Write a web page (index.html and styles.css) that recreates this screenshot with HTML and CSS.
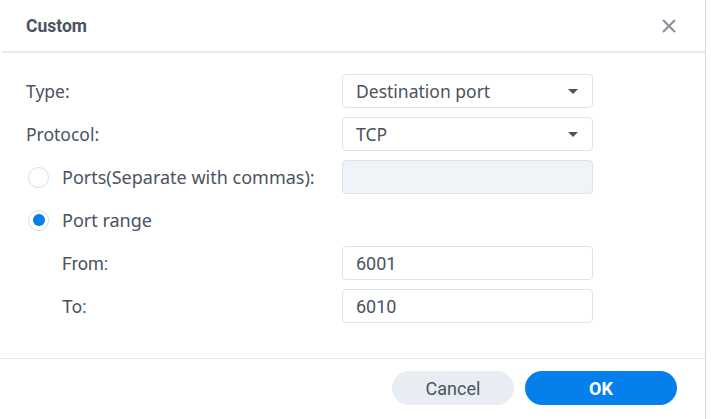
FILE: index.html
```html
<!DOCTYPE html>
<html lang="en">
<head>
    <meta charset="UTF-8">
    <title>Custom</title>
    <link rel="stylesheet" href="styles.css">
</head>
<body>

<div class="dialog">
    <div class="dialog-header">
        <span class="dialog-title">Custom</span>
        <span class="dialog-close">
            <svg width="16" height="16" viewBox="0 0 16 16">
                <path d="M2 2 L14 14 M14 2 L2 14" stroke="#8a929c" stroke-width="2.2" fill="none"/>
            </svg>
        </span>
    </div>

    <div class="dialog-body">
        <div class="row">
            <label class="field-label">Type:</label>
            <div class="select">
                <span>Destination port</span>
                <span class="caret"></span>
            </div>
        </div>

        <div class="row">
            <label class="field-label">Protocol:</label>
            <div class="select">
                <span>TCP</span>
                <span class="caret"></span>
            </div>
        </div>

        <div class="row">
            <label class="field-label radio-label">
                <span class="radio"></span>
                Ports(Separate with commas):
            </label>
            <div class="textbox disabled"></div>
        </div>

        <div class="row">
            <label class="field-label radio-label">
                <span class="radio checked"></span>
                Port range
            </label>
        </div>

        <div class="row">
            <label class="field-label sub">From:</label>
            <div class="textbox">6001</div>
        </div>

        <div class="row">
            <label class="field-label sub">To:</label>
            <div class="textbox">6010</div>
        </div>
    </div>

    <div class="dialog-footer">
        <button class="btn btn-cancel">Cancel</button>
        <button class="btn btn-ok">OK</button>
    </div>
</div>

</body>
</html>
```

FILE: styles.css
```css
body {
    margin: 0;
    background: #fff;
    font-family: "Noto Sans", sans-serif;
    color: #4a5361;
}

.dialog {
    width: 706px;
    height: 419px;
    border-right: 1px solid #d4d8dd;
    box-sizing: border-box;
    display: flex;
    flex-direction: column;
}

.dialog-header {
    height: 53px;
    flex-shrink: 0;
    margin-left: 2px;
    border-bottom: 2px solid #e9edf2;
    box-sizing: border-box;
    display: flex;
    align-items: center;
    justify-content: space-between;
    padding: 1px 28px 0 24px;
}

.dialog-title {
    font-family: Roboto, sans-serif;
    font-weight: bold;
    font-size: 17.5px;
    color: #4a5361;
}

.dialog-close {
    display: flex;
    align-items: center;
}

.dialog-body {
    padding: 21px 0 0 26px;
    display: flex;
    flex-direction: column;
    gap: 9px;
    height: 306px;
    flex-shrink: 0;
    box-sizing: border-box;
    border-bottom: 1px solid #e3e8ee;
}

.row {
    display: grid;
    grid-template-columns: 316px 251px;
    align-items: center;
    height: 34px;
}

.field-label {
    font-size: 17.5px;
    color: #4a5361;
}

.field-label.sub {
    padding-left: 36px;
    font-family: Roboto, sans-serif;
    font-size: 18px;
}

.radio-label {
    display: flex;
    align-items: center;
    gap: 13px;
    font-size: 18px;
}

.radio {
    width: 21px;
    height: 21px;
    border: 1px solid #d8dee6;
    border-radius: 50%;
    box-sizing: border-box;
    display: flex;
    align-items: center;
    justify-content: center;
    margin-left: 2px;
}

.radio.checked::after {
    content: "";
    width: 12px;
    height: 12px;
    border-radius: 50%;
    background: #057feb;
}

.select,
.textbox {
    height: 34px;
    border: 1px solid #dde3ea;
    border-radius: 4px;
    box-sizing: border-box;
    padding: 0 14px 0 13px;
    display: flex;
    align-items: center;
    justify-content: space-between;
    font-size: 17.5px;
    color: #4a5361;
}

.textbox {
    font-family: Roboto, sans-serif;
    font-size: 18px;
}

.textbox.disabled {
    background: #f0f3f7;
}

.caret {
    width: 0;
    height: 0;
    border-left: 5px solid transparent;
    border-right: 5px solid transparent;
    border-top: 5px solid #4a5361;
}

.dialog-footer {
    display: flex;
    justify-content: flex-end;
    gap: 11px;
    padding: 12px 28px 0 0;
}

.btn {
    height: 34px;
    border: none;
    border-radius: 17px;
    font-family: Roboto, sans-serif;
    font-size: 18px;
    cursor: pointer;
}

.btn-cancel {
    width: 122px;
    background: #e8edf3;
    color: #4a5361;
}

.btn-ok {
    width: 152px;
    background: #057feb;
    color: #fff;
    font-weight: bold;
}
```
